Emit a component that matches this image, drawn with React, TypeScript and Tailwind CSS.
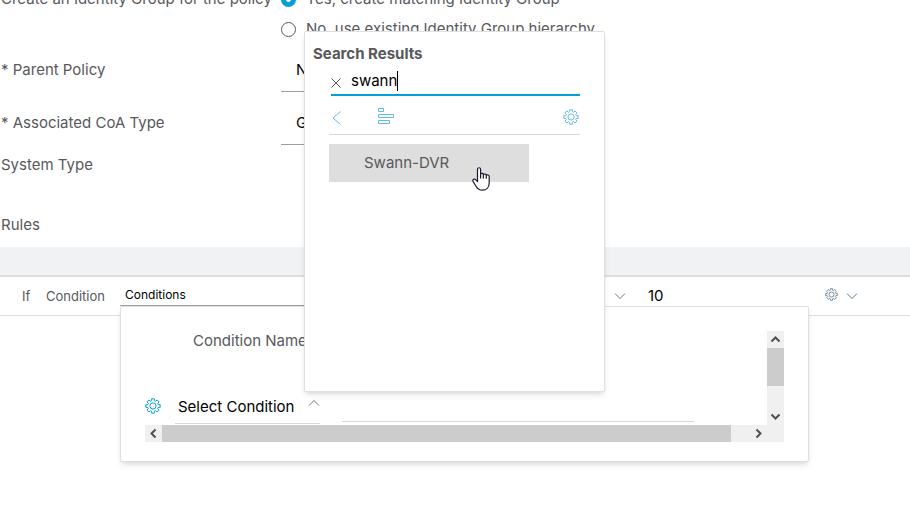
import { useState } from "react";
import type { ReactNode } from "react";

// outline of a cog with eight teeth, centred in a 16x16 box
const GEAR_PATH =
  Array.from({ length: 8 }, (_, i) => i * 45)
    .flatMap((a) => [
      [a - 15, 5.4],
      [a - 11, 7.3],
      [a + 11, 7.3],
      [a + 15, 5.4],
    ])
    .map(([deg, r], i) => {
      const t = (deg * Math.PI) / 180;
      const x = (8 + r * Math.sin(t)).toFixed(2);
      const y = (8 - r * Math.cos(t)).toFixed(2);
      return `${i === 0 ? "M" : "L"}${x} ${y}`;
    })
    .join(" ") + " Z";

function Gear({ className }: { className: string }) {
  return (
    <svg viewBox="0 0 16 16" fill="none" stroke="currentColor" className={className} aria-hidden="true">
      <path d={GEAR_PATH} />
      <circle cx="8" cy="8" r="3.1" />
    </svg>
  );
}

function Chevron({ up, className }: { up?: boolean; className: string }) {
  return (
    <svg viewBox="0 0 12 8" fill="none" stroke="currentColor" className={className} aria-hidden="true">
      <path d={up ? "M1 6.5 L6 1.5 L11 6.5" : "M1 1.5 L6 6.5 L11 1.5"} />
    </svg>
  );
}

function ScrollArrow({ d }: { d: string }) {
  return (
    <svg viewBox="0 0 17 17" fill="none" stroke="#505050" strokeWidth="2" className="size-[17px]" aria-hidden="true">
      <path d={d} />
    </svg>
  );
}

function HandCursor() {
  return (
    <svg
      viewBox="0 0 18 24"
      fill="#fff"
      stroke="#1a1a2e"
      strokeWidth="1.2"
      strokeLinejoin="round"
      className="pointer-events-none absolute left-[143px] top-[23px] h-6 w-[18px]"
      aria-hidden="true"
    >
      <path d="M5.5 14.5 V2.3 C5.5 0.2 8.6 0.2 8.6 2.3 V7 C9.2 6 11.3 6.2 11.4 7.6 C12.2 6.6 14.2 6.9 14.3 8.3 C15.3 7.5 17.2 7.9 17.2 9.5 V15.5 C17.2 20.5 14.5 23.2 10.6 23.2 C7 23.2 5.4 21.7 4 19.2 L1.2 14.6 C0.1 12.4 2.4 11.4 3.6 12.6 Z" />
      <path d="M8.6 7 V11.5 M11.4 7.6 V11.5 M14.3 8.3 V11.8" />
    </svg>
  );
}

function PolicyField({ id, label, children }: { id: string; label: string; children: ReactNode }) {
  return (
    <div className="flex h-[53px] items-center">
      <label htmlFor={id} className="w-[280px] shrink-0 pb-0.5">
        {label}
      </label>
      {children}
    </div>
  );
}

const RADIO =
  "size-[15px] shrink-0 appearance-none rounded-full border border-[#58585b] bg-white checked:border-[5px] checked:border-[#049fd9]";

const SELECT =
  "h-[43px] w-[260px] appearance-none border-b border-[#9e9ea2] bg-transparent pl-[15px] text-black outline-none";

function SearchPopup() {
  const [query, setQuery] = useState("swann");

  return (
    <section className="absolute left-[304px] top-[31px] z-20 h-[361px] w-[301px] rounded-xs border border-[#dfdfdf] bg-white px-6 pt-3 shadow-md">
      <h2 className="-ml-4 font-bold">Search Results</h2>
      <div className="ml-0.5 flex h-8 items-center border-b-2 border-[#049fd9] pt-1">
        <button type="button" aria-label="Clear search" className="w-5 pt-1">
          <svg viewBox="0 0 10 10" stroke="#58585b" className="size-[10px]" aria-hidden="true">
            <path d="M0.5 0.5 L9.5 9.5 M9.5 0.5 L0.5 9.5" />
          </svg>
        </button>
        <input
          aria-label="Search conditions"
          value={query}
          onChange={(e) => setQuery(e.target.value)}
          className="w-[46px] text-black outline-none"
        />
        <span className="h-5 w-px bg-black" />
      </div>
      <div className="flex h-[39px] items-center border-b border-[#d8d8d8] pt-1.5 text-[#64bbe3]">
        <button type="button" aria-label="Back" className="w-12 pl-[3px]">
          <svg viewBox="0 0 9 14" fill="none" stroke="currentColor" className="h-3.5 w-[9px]" aria-hidden="true">
            <path d="M8.5 0.5 L1 7 L8.5 13.5" />
          </svg>
        </button>
        <button type="button" aria-label="List view" className="pb-1">
          <svg viewBox="0 0 17 18" fill="none" stroke="currentColor" className="h-[18px] w-[17px]" aria-hidden="true">
            <path d="M1.5 1.5 h5 v3 h-5 z M1.5 7.5 h15 v3 h-15 z M1.5 13.5 h11 v3 h-11 z" />
          </svg>
        </button>
        <button type="button" aria-label="Search settings" className="ml-auto pb-0.5 pr-px">
          <Gear className="size-4" />
        </button>
      </div>
      <button type="button" className="relative mt-[9px] h-[38px] w-[200px] bg-[#dedede] pl-[35px] text-left">
        Swann-DVR
        <HandCursor />
      </button>
    </section>
  );
}

function ConditionsPopup() {
  return (
    <div className="absolute left-[120px] top-[29px] z-10 h-[156px] w-[689px] rounded-xs border border-[#dfdfdf] bg-white p-6 text-[15px] shadow-md">
      <div className="flex">
        <div className="h-[94px] grow">
          <label htmlFor="condition-name" className="ml-12 block">
            Condition Name
          </label>
          <div className="mt-[33px] flex h-10 items-end">
            <button type="button" aria-label="Condition settings" className="mb-2.5 text-[#049fd9]">
              <Gear className="size-4" />
            </button>
            <button
              type="button"
              className="ml-3.5 flex h-[34px] w-[145px] items-center justify-between border-b border-[#d8d8d8] pl-[3px] text-black"
            >
              Select Condition
              <Chevron up className="mb-2 h-2 w-3 text-[#77777c]" />
            </button>
            <input
              id="condition-name"
              className="mb-0.5 ml-[22px] h-8 w-[352px] border-b border-[#d8d8d8] outline-none"
            />
          </div>
        </div>
        <div className="flex w-[17px] flex-col bg-[#f0f0f0]">
          <button type="button" aria-label="Scroll up">
            <ScrollArrow d="M4.5 10.5 L8.5 6.5 L12.5 10.5" />
          </button>
          <div className="h-[38px] bg-[#cccccc]" />
          <button type="button" aria-label="Scroll down" className="mt-auto">
            <ScrollArrow d="M4.5 6.5 L8.5 10.5 L12.5 6.5" />
          </button>
        </div>
      </div>
      <div className="flex h-[17px] bg-[#f0f0f0] pr-[17px]">
        <button type="button" aria-label="Scroll left">
          <ScrollArrow d="M10.5 4.5 L6.5 8.5 L10.5 12.5" />
        </button>
        <div className="w-[569px] bg-[#cccccc]" />
        <button type="button" aria-label="Scroll right" className="ml-auto">
          <ScrollArrow d="M6.5 4.5 L10.5 8.5 L6.5 12.5" />
        </button>
      </div>
    </div>
  );
}

export default function App() {
  const [createGroup, setCreateGroup] = useState(true);

  return (
    <main className="relative min-h-screen overflow-hidden bg-white font-['Inter','Liberation_Sans',sans-serif] text-[15px] leading-5 text-[#58585b]">
      <form className="-mt-4 pl-px">
        <fieldset className="flex">
          <legend className="float-left flex h-[30px] w-[280px] shrink-0 items-center whitespace-nowrap">
            Create an Identity Group for the policy
          </legend>
          <div>
            <label className="flex h-[30px] items-center gap-2.5">
              <input
                type="radio"
                name="identity-group"
                checked={createGroup}
                onChange={() => setCreateGroup(true)}
                className={RADIO}
              />
              Yes, create matching Identity Group
            </label>
            <label className="flex h-[30px] items-center gap-2.5">
              <input
                type="radio"
                name="identity-group"
                checked={!createGroup}
                onChange={() => setCreateGroup(false)}
                className={RADIO}
              />
              No, use existing Identity Group hierarchy
            </label>
          </div>
        </fieldset>
        <PolicyField id="parent-policy" label="* Parent Policy">
          <select id="parent-policy" className={SELECT}>
            <option>NONE</option>
          </select>
        </PolicyField>
        <PolicyField id="coa-type" label="* Associated CoA Type">
          <select id="coa-type" className={SELECT}>
            <option>Global Settings</option>
          </select>
        </PolicyField>
        <p className="flex h-[30px] items-center">System Type</p>
      </form>

      <section>
        <h2 className="mt-[30px] h-[37px] pl-px pt-[5px]">Rules</h2>
        <div className="h-[30px] border-b-2 border-[#dedede] bg-[#f1f2f4]" />
        <div className="relative flex h-[39px] items-center border-b border-[#dedede]">
          <span className="w-[46px] shrink-0 pl-[22px] text-[13px]">If</span>
          <label htmlFor="rule-conditions" className="w-[74px] shrink-0 text-[13px]">
            Condition
          </label>
          <input
            id="rule-conditions"
            defaultValue="Conditions"
            className="mb-[9px] h-[22px] w-[300px] self-end border-b border-[#9e9ea2] pl-[5px] text-[12px] text-black outline-none"
          />
          <button type="button" aria-label="Choose action" className="ml-[194px] w-[33px] shrink-0 text-[#77777c]">
            <Chevron className="h-2 w-3" />
          </button>
          <input aria-label="Certainty value" defaultValue="10" className="w-[178px] pl-px text-black outline-none" />
          <button type="button" aria-label="Rule actions" className="flex items-center gap-2 text-[#5c7a92]">
            <Gear className="mb-1 size-[13px]" />
            <Chevron className="h-2 w-3" />
          </button>
          <ConditionsPopup />
        </div>
      </section>

      <SearchPopup />
    </main>
  );
}
